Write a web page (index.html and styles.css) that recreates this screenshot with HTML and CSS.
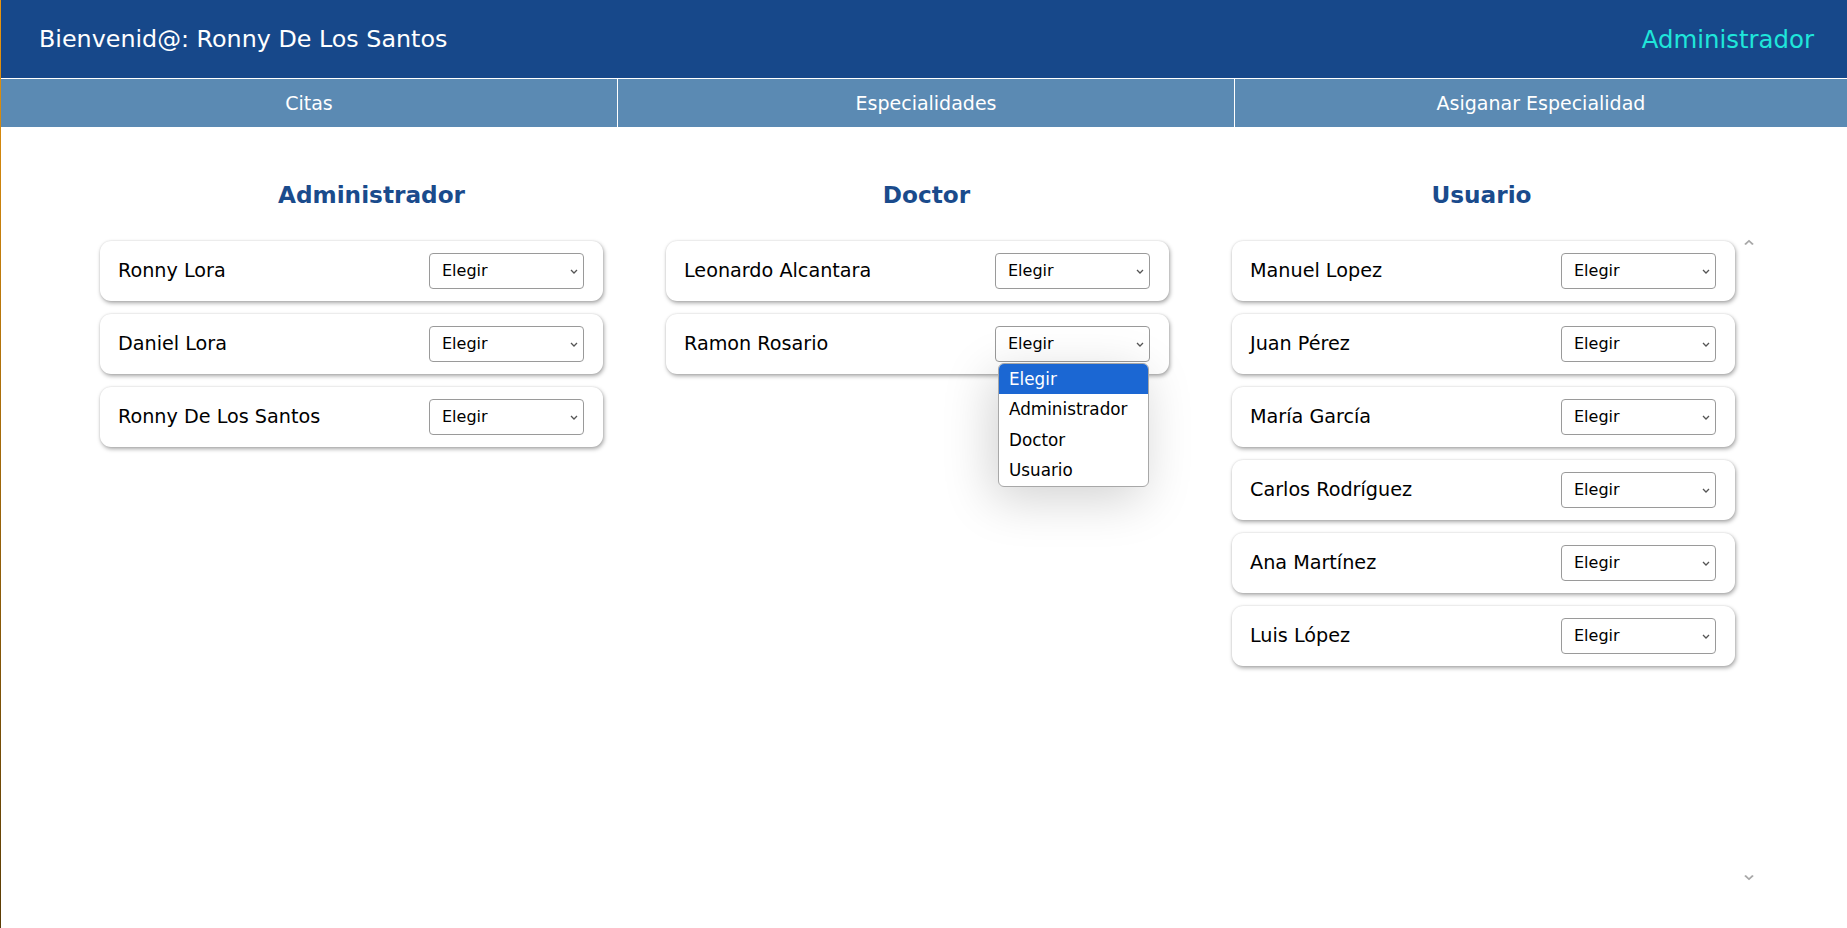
FILE: index.html
```html
<!DOCTYPE html>
<html lang="es">
<head>
<meta charset="utf-8">
<title>Asignar Roles</title>
<link rel="stylesheet" href="styles.css">
</head>
<body>
<header class="topbar">
  <div class="welcome">Bienvenid@: Ronny De Los Santos</div>
  <div class="role">Administrador</div>
</header>
<nav class="tabs">
  <a class="tab">Citas</a>
  <a class="tab">Especialidades</a>
  <a class="tab">Asiganar Especialidad</a>
</nav>
<main class="board">
  <div class="titles">
    <h2 class="col-title">Administrador</h2>
    <h2 class="col-title">Doctor</h2>
    <h2 class="col-title">Usuario</h2>
  </div>
  <div class="lists">
    <section class="list">
      <div class="card"><span class="name">Ronny Lora</span><span class="select">Elegir<svg class="chev" viewBox="0 0 8 5"><path d="M1 1l3 3 3-3"/></svg></span></div>
      <div class="card"><span class="name">Daniel Lora</span><span class="select">Elegir<svg class="chev" viewBox="0 0 8 5"><path d="M1 1l3 3 3-3"/></svg></span></div>
      <div class="card"><span class="name">Ronny De Los Santos</span><span class="select">Elegir<svg class="chev" viewBox="0 0 8 5"><path d="M1 1l3 3 3-3"/></svg></span></div>
    </section>
    <section class="list">
      <div class="card"><span class="name">Leonardo Alcantara</span><span class="select">Elegir<svg class="chev" viewBox="0 0 8 5"><path d="M1 1l3 3 3-3"/></svg></span></div>
      <div class="card"><span class="name">Ramon Rosario</span><span class="select">Elegir<svg class="chev" viewBox="0 0 8 5"><path d="M1 1l3 3 3-3"/></svg>
        <ul class="dropdown">
          <li class="opt active">Elegir</li>
          <li class="opt">Administrador</li>
          <li class="opt">Doctor</li>
          <li class="opt">Usuario</li>
        </ul>
      </span></div>
    </section>
    <section class="list scrolled">
      <div class="list-inner">
        <div class="card"><span class="name">Manuel Lopez</span><span class="select">Elegir<svg class="chev" viewBox="0 0 8 5"><path d="M1 1l3 3 3-3"/></svg></span></div>
        <div class="card"><span class="name">Juan Pérez</span><span class="select">Elegir<svg class="chev" viewBox="0 0 8 5"><path d="M1 1l3 3 3-3"/></svg></span></div>
        <div class="card"><span class="name">María García</span><span class="select">Elegir<svg class="chev" viewBox="0 0 8 5"><path d="M1 1l3 3 3-3"/></svg></span></div>
        <div class="card"><span class="name">Carlos Rodríguez</span><span class="select">Elegir<svg class="chev" viewBox="0 0 8 5"><path d="M1 1l3 3 3-3"/></svg></span></div>
        <div class="card"><span class="name">Ana Martínez</span><span class="select">Elegir<svg class="chev" viewBox="0 0 8 5"><path d="M1 1l3 3 3-3"/></svg></span></div>
        <div class="card"><span class="name">Luis López</span><span class="select">Elegir<svg class="chev" viewBox="0 0 8 5"><path d="M1 1l3 3 3-3"/></svg></span></div>
      </div>
      <div class="rail">
        <svg class="arrow" viewBox="0 0 8 5"><path d="M0 4.2L4 0.6 8 4.2 6.6 5 4 2.6 1.4 5z"/></svg>
        <svg class="arrow" viewBox="0 0 8 5"><path d="M0 0.8L4 4.4 8 0.8 6.6 0 4 2.4 1.4 0z"/></svg>
      </div>
    </section>
  </div>
</main>
</body>
</html>
```
FILE: styles.css
```css
* { box-sizing: border-box; }
html, body { height: 100%; }
body {
  margin: 0;
  font-family: "DejaVu Sans", "Liberation Sans", sans-serif;
  background: #ffffff;
  color: #000;
  border-left: 1px solid #b07410;
  border-image: linear-gradient(#e8950f, #5a3c05) 1;
  min-height: 928px;
}
.topbar {
  height: 79px;
  background: #17488a;
  border-bottom: 1px solid #ffffff;
  display: flex;
  align-items: center;
  justify-content: space-between;
  padding: 0 33px 0 38px;
}
.welcome { color: #ffffff; font-size: 23.8px; }
.role { color: #1fe6da; font-size: 24.4px; }
.tabs {
  display: grid;
  grid-template-columns: 616px 617px 1fr;
  height: 48px;
  background: #5b8ab3;
}
.tab {
  display: flex;
  align-items: center;
  justify-content: center;
  color: #ffffff;
  font-size: 19px;
  border-left: 1px solid #ffffff;
}
.tab:first-child { border-left: none; }
.board { padding-top: 54px; }
.titles {
  display: grid;
  grid-template-columns: repeat(3, 555px);
  padding-left: 93px;
}
.col-title {
  margin: 0;
  text-align: center;
  font-size: 23.2px;
  line-height: 28px;
  font-weight: bold;
  color: #1a4b8c;
}
.lists {
  display: grid;
  grid-template-columns: repeat(3, 503px);
  column-gap: 63px;
  padding-left: 99px;
  margin-top: 32px;
}
.list { display: flex; flex-direction: column; gap: 13px; }
.list.scrolled { flex-direction: row; gap: 0; height: 645px; }
.list-inner { display: flex; flex-direction: column; gap: 13px; width: 503px; flex: none; }
.rail {
  flex: none;
  width: 28px;
  margin-top: -2px;
  margin-bottom: 5px;
  display: flex;
  flex-direction: column;
  justify-content: space-between;
  align-items: center;
}
.arrow { width: 10px; height: 6px; fill: #a8a8a8; }
.card {
  height: 60px;
  background: #ffffff;
  border-radius: 11px;
  box-shadow: 1px 2px 4px rgba(0, 0, 0, 0.35), 0 0 2px rgba(0, 0, 0, 0.12);
  display: flex;
  align-items: center;
  justify-content: space-between;
  padding: 0 19px 1px 18px;
}
.name { font-size: 19.2px; }
.select {
  position: relative;
  width: 155px;
  height: 36px;
  border: 1px solid #9a9a9a;
  border-radius: 4px;
  display: flex;
  align-items: center;
  padding-left: 12px;
  padding-bottom: 1px;
  font-size: 16px;
  background: #fff;
}
.chev {
  position: absolute;
  right: 5px;
  top: 15px;
  width: 8px;
  height: 5px;
  fill: none;
  stroke: #555;
  stroke-width: 1.3;
}
.dropdown {
  position: absolute;
  left: 2px;
  top: 36px;
  width: 151px;
  margin: 0;
  padding: 0;
  list-style: none;
  background: #fff;
  border: 1px solid #a8a8a8;
  border-radius: 6px;
  overflow: hidden;
  box-shadow: -6px 12px 50px rgba(0, 0, 0, 0.18);
  z-index: 10;
}
.opt {
  height: 30.5px;
  line-height: 30.5px;
  padding-left: 10px;
  font-size: 16.8px;
  color: #000;
}
.opt.active { background: #1b67d3; color: #fff; }
```
